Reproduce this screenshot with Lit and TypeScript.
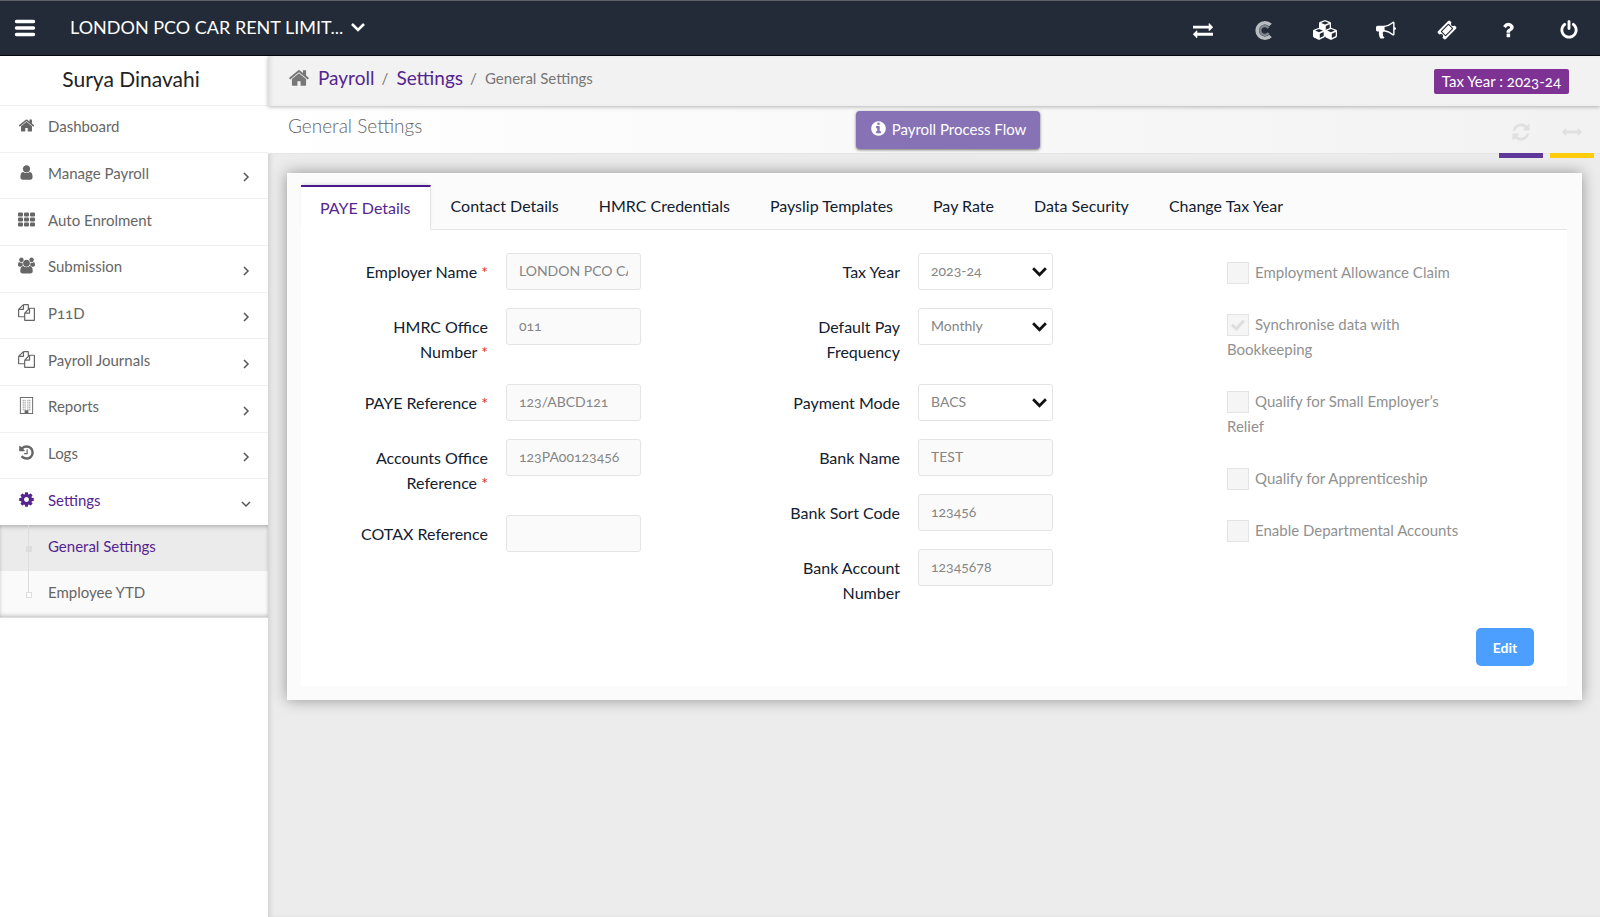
import { LitElement, html, css, svg, nothing } from "lit";
import { customElement, property } from "lit/decorators.js";
import { classMap } from "lit/directives/class-map.js";

interface Glyph {
  box: string;
  draw: unknown;
}

const path = (d: string, box = "0 0 1792 1792"): Glyph => ({ box, draw: svg`<path fill="currentColor" d=${d}></path>` });

const cube = (x: number, y: number) => svg`
  <g transform="translate(${x} ${y})">
    <path fill="currentColor" d="M6 0l5.2 2.1q.8.4.8 1.2v5q0 .8-.7 1.2L6.600 12q-.6.3-1.200 0L.7 9.500Q0 9.100 0 8.300v-5q0-.8.8-1.200z"></path>
    <path fill="#222b37" d="M6 1.300l3.900 1.600L6 4.600 2.100 2.900zM6.800 6l3.900-1.700v3.900l-3.900 2.100z"></path>
  </g>`;

const glyphs: Record<string, Glyph> = {
  home: path("M1472 992v480q0 26-19 45t-45 19h-384v-384h-256v384h-384q-26 0-45-19t-19-45v-480q0-1 .5-3t.5-3l575-474 575 474q1 2 1 6zm223-69l-62 74q-8 9-21 11h-3q-13 0-21-7l-692-577-692 577q-12 8-24 7-13-2-21-11l-62-74q-8-10-7-23.5t11-21.5l719-599q32-26 76-26t76 26l244 204v-195q0-14 9-23t23-9h192q14 0 23 9t9 23v408l219 182q10 8 11 21.5t-7 23.5z"),
  user: path("M1536 1399q0 109-62.5 187t-150.5 78h-854q-88 0-150.5-78t-62.5-187q0-85 8.5-160.5t31.5-152 58.5-131 94-89 134.5-34.5q131 128 313 128t313-128q76 0 134.500 34.500t94 89 58.500 131 31.500 152 8.500 160.500zm-256-887q0 159-112.500 271.500t-271.500 112.500-271.500-112.500-112.500-271.500 112.500-271.500 271.500-112.500 271.500 112.500 112.500 271.500z"),
  grid: {
    box: "0 0 17 14",
    draw: [0, 5, 10].map((y) => [0, 6, 12].map((x) => svg`<rect fill="currentColor" x=${x} y=${y} width="5" height="4" rx="1"></rect>`)),
  },
  users: path("M593 896q-162 5-265 128h-134q-82 0-138-40.500t-56-118.500q0-353 124-353 6 0 43.500 21t97.500 42.500 119 21.500q67 0 133-23-5 37-5 66 0 139 81 256zm1071 637q0 120-73 189.500t-194 69.500h-874q-121 0-194-69.500t-73-189.500q0-53 3.500-103.500t14-109 26.500-108.500 43-97.500 62-81 85.500-53.500 111.500-20q10 0 43 21.500t73 48 107 48 135 21.500 135-21.500 107-48 73-48 43-21.500q61 0 111.500 20t85.500 53.500 62 81 43 97.500 26.500 108.500 14 109 3.500 103.500zm-1024-1277q0 106-75 181t-181 75-181-75-75-181 75-181 181-75 181 75 75 181zm704 384q0 159-112.500 271.500t-271.500 112.500-271.500-112.500-112.500-271.500 112.500-271.500 271.500-112.500 271.500 112.500 112.500 271.500zm576 225q0 78-56 118.500t-138 40.500h-134q-103-123-265-128 81-117 81-256 0-29-5-66 66 23 133 23 59 0 119-21.500t97.500-42.500 43.500-21q124 0 124 353zm-128-609q0 106-75 181t-181 75-181-75-75-181 75-181 181-75 181 75 75 181z", "0 0 1920 1792"),
  files: path("M1696 384q40 0 68 28t28 68v1216q0 40-28 68t-68 28h-960q-40 0-68-28t-28-68v-288h-544q-40 0-68-28t-28-68v-672q0-40 20-88t48-76l408-408q28-28 76-48t88-20h416q40 0 68 28t28 68v328q68-40 128-40h416zm-544 213l-299 299h299v-299zm-640-384l-299 299h299v-299zm196 647l316-316v-416h-384v416q0 40-28 68t-68 28h-416v640h512v-256q0-40 20-88t48-76zm956 804v-1152h-384v416q0 40-28 68t-68 28h-416v640h896z"),
  building: {
    box: "0 0 14 18",
    draw: svg`
      <rect x=".5" y=".5" width="13" height="17" fill="none" stroke="currentColor"></rect>
      ${[3, 5, 7, 9, 11, 13].map((y) => [3, 5, 8, 10].map((x) => svg`<rect fill="currentColor" x=${x} y=${y} width="1" height="1"></rect>`))}
      <rect x="5" y="14" width="4" height="3" fill="currentColor"></rect>`,
  },
  history: path("M1664 896q0 156-61 298t-164 245-245 164-298 61q-172 0-327-72.500t-264-204.500q-7-10-6.500-22.500t8.500-20.500l137-138q10-9 25-9 16 2 23 12 73 95 179 147t225 52q104 0 198.500-40.500t163.500-109.500 109.500-163.500 40.500-198.500-40.500-198.500-109.500-163.500-163.500-109.500-198.500-40.500q-98 0-188 35.500t-160 101.500l137 138q31 30 14 69-17 40-59 40h-448q-26 0-45-19t-19-45v-448q0-42 40-59 39-17 69 14l130 129q107-101 244.500-156.500t284.500-55.500q156 0 298 61t245 164 164 245 61 298zm-640-288v448q0 14-9 23t-23 9h-320q-14 0-23-9t-9-23v-64q0-14 9-23t23-9h224v-352q0-14 9-23t23-9h64q14 0 23 9t9 23z"),
  cog: path("M1152 896q0-106-75-181t-181-75-181 75-75 181 75 181 181 75 181-75 75-181zm512-109v222q0 12-8 23t-20 13l-185 28q-19 54-39 91 35 50 107 138 10 12 10 25t-9 23q-27 37-99 108t-94 71q-12 0-26-9l-138-108q-44 23-91 38-16 136-29 186-7 28-36 28h-222q-14 0-24.500-8.500t-11.500-21.500l-28-184q-49-16-90-37l-141 107q-10 9-25 9-14 0-25-11-126-114-165-168-7-10-7-23 0-12 8-23 15-21 51-66.500t54-70.500q-27-50-41-99l-183-27q-13-2-21-12.500t-8-23.500v-222q0-12 8-23t19-13l186-28q14-46 39-92-40-57-107-138-10-12-10-24 0-10 9-23 26-36 98.500-107.500t94.500-71.500q13 0 26 10l138 107q44-23 91-38 16-136 29-186 7-28 36-28h222q14 0 24.500 8.500t11.500 21.500l28 184q49 16 90 37l142-107q9-9 24-9 13 0 25 10 129 119 165 170 7 8 7 22 0 12-8 23-15 21-51 66.500t-54 70.500q26 50 41 98l183 28q13 2 21 12.500t8 23.500z"),
  refresh: path("M1639 1056q0 5-1 7-64 268-268 434.500t-478 166.500q-146 0-282.500-55t-243.500-157l-129 129q-19 19-45 19t-45-19-19-45v-448q0-26 19-45t45-19h448q26 0 45 19t19 45-19 45l-137 137q71 66 161 102t187 36q134 0 250-65t186-179q11-17 53-117 8-23 30-23h192q13 0 22.500 9.500t9.500 22.500zm25-800v448q0 26-19 45t-45 19h-448q-26 0-45-19t-19-45 19-45l138-138q-148-137-349-137-134 0-250 65t-186 179q-11 17-53 117-8 23-30 23h-199q-13 0-22.500-9.500t-9.500-22.500v-7q65-268 270-434.500t480-166.500q146 0 284 55.500t245 156.500l130-129q19-19 45-19t45 19 19 45z"),
  widen: path("M1792 896q0 26-19 45l-256 256q-19 19-45 19t-45-19-19-45v-128h-1024v128q0 26-19 45t-45 19-45-19l-256-256q-19-19-19-45t19-45l256-256q19-19 45-19t45 19 19 45v128h1024v-128q0-26 19-45t45-19 45 19l256 256q19 19 19 45z"),
  exchange: path("M1792 1184v192q0 13-9.500 22.500t-22.500 9.500h-1376v192q0 13-9.500 22.500t-22.500 9.500q-12 0-24-10l-319-320q-9-9-9-22 0-14 9-23l320-320q9-9 23-9 13 0 22.500 9.500t9.500 22.500v192h1376q13 0 22.500 9.500t9.500 22.500zm0-544q0 14-9 23l-320 320q-9 9-23 9-13 0-22.500-9.500t-9.500-22.500v-192h-1376q-13 0-22.500-9.500t-9.500-22.500v-192q0-13 9.500-22.500t22.500-9.500h1376v-192q0-14 9-23t23-9q12 0 24 10l319 319q9 9 9 23z"),
  brand: {
    box: "0 0 20 20",
    draw: svg`
      <path d="M16.500 5A7.800 7.800 0 1 0 16.500 16" fill="none" stroke="#b9bdc2" stroke-width="3.600"></path>
      <path d="M14.500 8A4.500 4.500 0 1 0 14.500 13" fill="none" stroke="#80868f" stroke-width="2.400"></path>`,
  },
  cubes: { box: "0 0 24 20", draw: svg`${cube(6, 0)}${cube(0, 7.700)}${cube(12, 7.700)}` },
  bullhorn: path("M1664 640q53 0 90.500 37.500t37.500 90.500-37.500 90.500-90.500 37.500v384q0 52-38 90t-90 38q-417-347-812-380-58 19-91 66t-31 100.500 40 92.500q-20 33-23 65.500t6 58 33.500 55 48 50 61.500 50.500q-29 58-111.500 83t-168.500 11.500-132-55.500q-7-23-29.500-87.500t-32-94.500-23-89-15-101 3.500-98.500 22-110.500h-122q-66 0-113-47t-47-113v-192q0-66 47-113t113-47h480q435 0 896-384 52 0 90 38t38 90v384zm-128 604v-954q-394 302-768 343v270q377 42 768 341z"),
  ticket: path("M1024 452l316 316-572 572-316-316zm-211 979l618-618q19-19 19-45t-19-45l-362-362q-18-18-45-18t-45 18l-618 618q-19 19-19 45t19 45l362 362q18 18 45 18t45-18zm889-637l-907 908q-37 37-90.500 37t-90.500-37l-126-126q56-56 56-136t-56-136-136-56-136 56l-125-126q-37-37-37-90.500t37-90.500l907-906q37-37 90.500-37t90.500 37l125 125q-56 56-56 136t56 136 136 56 136-56l126 125q37 37 37 90.500t-37 90.500z"),
  question: path("M1088 1256v240q0 16-12 28t-28 12h-240q-16 0-28-12t-12-28v-240q0-16 12-28t28-12h240q16 0 28 12t12 28zm316-600q0 54-15.500 101t-35 76.500-55 59.500-57.500 43.500-61 35.500q-41 23-68.500 65t-27.500 67q0 17-12 32.500t-28 15.500h-240q-15 0-25.500-18.500t-10.500-37.500v-45q0-83 65-156.500t143-108.500q59-27 84-56t25-76q0-42-46.500-74t-107.500-32q-65 0-108 29-35 25-107 115-13 16-31 16-12 0-25-8l-164-125q-13-10-15.500-25t5.500-28q160-266 464-266 80 0 161 31t146 83 106 127.500 41 158.500z"),
  power: path("M1664 896q0 156-61 298t-164 245-245 164-298 61-298-61-245-164-164-245-61-298q0-182 80.500-343t226.500-270q43-32 95.500-25t83.500 50q32 42 24.500 94.500t-49.500 84.500q-98 74-151.500 181t-53.500 228q0 104 40.500 198.500t109.500 163.500 163.500 109.500 198.500 40.500 198.500-40.500 163.500-109.500 109.500-163.500 40.500-198.500q0-121-53.500-228t-151.500-181q-42-32-49.500-84.500t24.500-94.500q31-43 84-50t95 25q146 109 226.500 270t80.500 343zm-640-768v640q0 52-38 90t-90 38-90-38-38-90v-640q0-52 38-90t90-38 90 38 38 90z"),
  info: path("M1152 1376v-160q0-14-9-23t-23-9h-96v-512q0-14-9-23t-23-9h-320q-14 0-23 9t-9 23v160q0 14 9 23t23 9h96v320h-96q-14 0-23 9t-9 23v160q0 14 9 23t23 9h448q14 0 23-9t9-23zm-128-896v-160q0-14-9-23t-23-9h-192q-14 0-23 9t-9 23v160q0 14 9 23t23 9h192q14 0 23-9t9-23zm640 416q0 209-103 385.500t-279.500 279.500-385.500 103-385.500-103-279.500-279.500-103-385.500 103-385.500 279.500-279.500 385.500-103 385.500 103 279.500 279.500 103 385.500z"),
  bars: { box: "0 0 20 18", draw: svg`<path d="M1.500 2.500h17M1.500 9h17M1.500 15.500h17" stroke="currentColor" stroke-width="3.400" stroke-linecap="round"></path>` },
  down: { box: "0 0 16 16", draw: svg`<path d="M2 5l6 6 6-6" fill="none" stroke="currentColor" stroke-width="2.600"></path>` },
  right: { box: "0 0 10 10", draw: svg`<path d="M3 1l4 4-4 4" fill="none" stroke="currentColor" stroke-width="1.500"></path>` },
  open: { box: "0 0 10 10", draw: svg`<path d="M1 3l4 4 4-4" fill="none" stroke="currentColor" stroke-width="1.500"></path>` },
};

@customElement("ui-icon")
export class UiIcon extends LitElement {
  @property() name = "home";

  static styles = css`
    :host { display: inline-flex; flex: none; width: 16px; height: 16px; }
    svg { width: 100%; height: 100%; display: block; overflow: visible; }
  `;

  render() {
    const glyph = glyphs[this.name];
    return html`<svg viewBox=${glyph.box} aria-hidden="true">${glyph.draw}</svg>`;
  }
}

const shared = css`
  *, *::before, *::after { box-sizing: border-box; }
  a { color: inherit; text-decoration: none; }
  button, input, select { font: inherit; }
`;

@customElement("top-bar")
export class TopBar extends LitElement {
  static styles = [
    shared,
    css`
      :host { display: block; }
      .bar { display: flex; align-items: center; height: 56px; padding: 0 16px 0 15px; background: #222b37; border-top: 1px solid #5d6066; border-bottom: 1px solid #05080c; color: #fff; }
      button { display: flex; align-items: center; padding: 0; border: 0; background: none; color: inherit; cursor: pointer; }
      .menu ui-icon { width: 20px; height: 18px; }
      .company { gap: 7px; margin-left: 35px; padding-bottom: 3px; font-size: 18px; }
      .company ui-icon { width: 16px; height: 16px; }
      .tools { display: flex; margin-left: auto; gap: 17px; padding-top: 4px; margin-right: -7px; }
      .tools button { width: 44px; height: 44px; justify-content: center; }
      .tools ui-icon { width: 20px; height: 20px; }
      .tools ui-icon.wide { width: 24px; }
    `,
  ];

  render() {
    const tools = [["exchange", "Switch product"], ["brand", "Capium"], ["cubes", "Modules"], ["bullhorn", "News"], ["ticket", "Tickets"], ["question", "Help"], ["power", "Log out"]];
    return html`<header class="bar">
      <button class="menu" aria-label="Toggle menu"><ui-icon name="bars"></ui-icon></button>
      <button class="company">LONDON PCO CAR RENT LIMIT...<ui-icon name="down"></ui-icon></button>
      <div class="tools">
        ${tools.map(([name, label]) => html`<button aria-label=${label}><ui-icon class=${classMap({ wide: name === "cubes" })} name=${name}></ui-icon></button>`)}
      </div>
    </header>`;
  }
}

@customElement("side-nav")
export class SideNav extends LitElement {
  static styles = [
    shared,
    css`
      :host { display: block; background: #fff; }
      .name { height: 49px; padding: 9px 6px 0 0; font-size: 21px; line-height: 28px; text-align: center; color: #222; }
      ul { margin: 0; padding: 0; list-style: none; }
      .main { display: grid; grid-auto-rows: 1fr; height: 420px; }
      .link { display: flex; align-items: center; height: 100%; padding: 0 17px; border-top: 1px solid #f0f0f0; font-size: 15px; color: #666; }
      .glyph { display: flex; justify-content: center; width: 18px; margin-right: 13px; padding-bottom: 6px; }
      .glyph ui-icon { width: 17px; height: 17px; }
      .label { flex: 1; padding-bottom: 5px; }
      .link .arrow { width: 10px; height: 10px; margin-top: 4px; color: #555; }
      .active { color: #55258f; }
      .sub { background: #fafafa; box-shadow: inset 0 3px 5px -2px #aaa, inset 0 -3px 4px -2px #bbb; border-bottom: 1px solid #ddd; }
      .sub .link { position: relative; height: 46px; border: 0; padding-left: 48px; }
      .sub .active { background: rgba(0, 0, 0, 0.06); }
      .sub .link::before { content: ""; position: absolute; left: 28px; top: 0; bottom: 0; border-left: 1px solid #ddd; }
      .sub .link::after { content: ""; position: absolute; left: 26px; top: 21px; width: 6px; height: 6px; border: 1px solid #ddd; background: #fff; }
      .sub .active::after { background: #ddd; }
      .sub li:last-child .link::before { bottom: 24px; }
    `,
  ];

  render() {
    const items: [string, string, string][] = [
      ["home", "Dashboard", ""],
      ["user", "Manage Payroll", "right"],
      ["grid", "Auto Enrolment", ""],
      ["users", "Submission", "right"],
      ["files", "P11D", "right"],
      ["files", "Payroll Journals", "right"],
      ["building", "Reports", "right"],
      ["history", "Logs", "right"],
      ["cog", "Settings", "open"],
    ];
    return html`<nav aria-label="Payroll">
      <div class="name">Surya Dinavahi</div>
      <ul class="main">
        ${items.map(([icon, label, arrow]) => html`<li>
          <a href="#" class=${classMap({ link: true, active: icon === "cog" })}>
            <span class="glyph"><ui-icon name=${icon}></ui-icon></span>
            <span class="label">${label}</span>
            ${arrow ? html`<ui-icon class="arrow" name=${arrow}></ui-icon>` : nothing}
          </a>
        </li>`)}
      </ul>
      <ul class="sub">
        <li><a href="#" class="link active"><span class="label">General Settings</span></a></li>
        <li><a href="#" class="link"><span class="label">Employee YTD</span></a></li>
      </ul>
    </nav>`;
  }
}

interface Field {
  id: string;
  label: string;
  value: string;
  required?: boolean;
  select?: boolean;
}

const employer: Field[] = [
  { id: "employer", label: "Employer Name", value: "LONDON PCO CAR RENT LIMITED", required: true },
  { id: "office", label: "HMRC Office Number", value: "011", required: true },
  { id: "paye", label: "PAYE Reference", value: "123/ABCD121", required: true },
  { id: "accounts", label: "Accounts Office Reference", value: "123PA00123456", required: true },
  { id: "cotax", label: "COTAX Reference", value: "" },
];

const payment: Field[] = [
  { id: "year", label: "Tax Year", value: "2023-24", select: true },
  { id: "frequency", label: "Default Pay Frequency", value: "Monthly", select: true },
  { id: "mode", label: "Payment Mode", value: "BACS", select: true },
  { id: "bank", label: "Bank Name", value: "TEST" },
  { id: "sort", label: "Bank Sort Code", value: "123456" },
  { id: "account", label: "Bank Account Number", value: "12345678" },
];

@customElement("settings-form")
export class SettingsForm extends LitElement {
  static styles = [
    shared,
    css`
      :host { display: block; }
      .panel { padding: 12px 15px 14px 14px; background: #fbfbfb; box-shadow: 0 0 14px rgba(0, 0, 0, 0.38); }
      .tabs { display: flex; border-bottom: 1px solid #e6e6e6; }
      .tabs button { height: 44px; padding: 0 20px 4px; border: 0; background: none; font-size: 16px; color: #12202f; white-space: nowrap; cursor: pointer; }
      .tabs .current { height: 45px; margin-bottom: -1px; padding: 0 19px 2px; border-top: 2px solid #4b1a8c; border-right: 1px solid #e6e6e6; background: #fff; color: #55258f; box-shadow: 0 -2px 4px -2px rgba(0, 0, 0, 0.2); }
      .body { background: #fff; padding: 23px 15px 20px; }
      .columns { display: grid; grid-template-columns: repeat(3, minmax(0, 1fr)); }
      .row { display: grid; grid-template-columns: 172fr 135fr 69fr; column-gap: 18px; margin-bottom: 18px; align-items: start; }
      .row label { padding-top: 6px; padding-bottom: 2px; padding-left: 30px; font-size: 16px; line-height: 25px; text-align: right; color: #12202f; }
      .star { color: #e02a20; }
      .slot { display: grid; align-items: center; }
      .slot > * { grid-area: 1 / 1; }
      input.text, select { width: 100%; height: 37px; padding: 0 12px 2px; border: 1px solid #e4e4e4; border-radius: 3px; background: #fafafa; color: #858585; font-size: 14px; font-variant-numeric: oldstyle-nums; opacity: 1; }
      select { appearance: none; background: #fff; }
      .slot ui-icon { justify-self: end; margin-right: 5px; width: 17px; height: 17px; color: #111; pointer-events: none; }
      .checks { padding: 7px 0 0 87px; }
      .check { display: block; max-width: 240px; margin-bottom: 27px; font-size: 15px; line-height: 25px; color: #919191; }
      .check input { appearance: none; width: 22px; height: 22px; margin: -4px 6px -2px 0; border: 1px solid #e4e4e4; background: #f5f5f5; vertical-align: middle; display: inline-grid; place-content: center; }
      .check input:checked::before { content: ""; width: 14px; height: 12px; background: #dedede; clip-path: polygon(0 55%, 14% 38%, 37% 62%, 84% 3%, 100% 20%, 38% 98%); }
      .actions { display: flex; justify-content: flex-end; padding: 3px 18px 0 0; }
      .edit { width: 58px; height: 38px; border: 0; border-radius: 5px; background: #4d9fff; color: #fff; font-size: 14px; font-weight: 700; cursor: pointer; }
    `,
  ];

  private field(f: Field) {
    return html`<div class="row">
      <label for=${f.id}>${f.label}${f.required ? html` <span class="star">*</span>` : nothing}</label>
      <div class="slot">
        ${f.select
          ? html`<select id=${f.id} disabled><option>${f.value}</option></select><ui-icon name="down"></ui-icon>`
          : html`<input class="text" id=${f.id} type="text" .value=${f.value} disabled />`}
      </div>
    </div>`;
  }

  render() {
    const tabs = ["PAYE Details", "Contact Details", "HMRC Credentials", "Payslip Templates", "Pay Rate", "Data Security", "Change Tax Year"];
    const checks = ["Employment Allowance Claim", "Synchronise data with Bookkeeping", "Qualify for Small Employer’s Relief", "Qualify for Apprenticeship", "Enable Departmental Accounts"];
    return html`<section class="panel">
      <div class="tabs" role="tablist">
        ${tabs.map((t, i) => html`<button role="tab" aria-selected=${i === 0} class=${classMap({ current: i === 0 })}>${t}</button>`)}
      </div>
      <div class="body">
        <div class="columns">
          <div>${employer.map((f) => this.field(f))}</div>
          <div>${payment.map((f) => this.field(f))}</div>
          <div class="checks">
            ${checks.map((c, i) => html`<label class="check"><input type="checkbox" disabled .checked=${i === 1} />${c}</label>`)}
          </div>
        </div>
        <div class="actions"><button class="edit">Edit</button></div>
      </div>
    </section>`;
  }
}

@customElement("app-root")
export class AppRoot extends LitElement {
  static styles = [
    shared,
    css`
      :host { display: flex; flex-direction: column; min-height: 100vh; font-family: Lato, "Open Sans", sans-serif; font-variant-numeric: oldstyle-nums; }
      .layout { flex: 1; display: grid; grid-template-columns: 268px minmax(0, 1fr); }
      .page { background: #ececec; box-shadow: inset 4px 0 5px -2px rgba(0, 0, 0, 0.12); }
      .crumbs { display: flex; align-items: center; height: 50px; padding: 0 31px 7px 20px; background: #f2f2f2; box-shadow: 0 1px 4px rgba(0, 0, 0, 0.28), inset 4px 0 5px -2px rgba(0, 0, 0, 0.1); position: relative; color: #777; }
      .crumbs ui-icon { width: 22px; height: 22px; margin-right: 8px; }
      .crumbs a { font-size: 19px; color: #55258f; }
      .slash { width: 22px; padding-left: 7px; font-size: 15px; }
      .here { font-size: 15px; }
      .badge { margin: 7px 0 0 auto; padding: 0 8px; border-radius: 2px; background: #7d3294; color: #fff; font-size: 15px; line-height: 25px; }
      .heading { display: grid; grid-template-columns: minmax(0, 568fr) auto minmax(0, 560fr); height: 48px; padding-left: 20px; border-bottom: 1px solid #e4e4e4; background: linear-gradient(90deg, #fff, #f2f2f2); }
      h1 { margin: 0; padding-top: 5px; font-size: 19px; line-height: 30px; font-weight: 300; color: #666; }
      .flow { position: relative; display: flex; align-items: center; gap: 5px; height: 38px; width: 184px; justify-content: center; margin-top: 5px; padding: 0 0 3px; border: 0; border-radius: 4px; background: #8772b5; box-shadow: 0 1px 3px rgba(0, 0, 0, 0.55); color: #fff; font-size: 15px; cursor: pointer; }
      .flow ui-icon { width: 17px; height: 17px; }
      .quick { display: flex; justify-content: flex-end; gap: 7px; height: 52px; padding-right: 6px; }
      .quick a { display: flex; justify-content: center; align-items: center; width: 44px; border-bottom: 5px solid #60379a; color: #e0e0e0; padding-top: 4px; }
      .quick a:last-child { border-color: #ffcc0c; }
      .quick ui-icon { width: 20px; height: 20px; }
      .content { padding: 19px 18px 40px 19px; }
    `,
  ];

  render() {
    return html`
      <top-bar></top-bar>
      <div class="layout">
        <side-nav></side-nav>
        <main class="page">
          <nav class="crumbs" aria-label="Breadcrumb">
            <ui-icon name="home"></ui-icon>
            <a href="#">Payroll</a><span class="slash">/</span>
            <a href="#">Settings</a><span class="slash">/</span>
            <span class="here">General Settings</span>
            <span class="badge">Tax Year : 2023-24</span>
          </nav>
          <div class="heading">
            <h1>General Settings</h1>
            <button class="flow"><ui-icon name="info"></ui-icon>Payroll Process Flow</button>
            <div class="quick">
              <a href="#" aria-label="Refresh"><ui-icon name="refresh"></ui-icon></a>
              <a href="#" aria-label="Full width"><ui-icon name="widen"></ui-icon></a>
            </div>
          </div>
          <div class="content"><settings-form></settings-form></div>
        </main>
      </div>
    `;
  }
}
